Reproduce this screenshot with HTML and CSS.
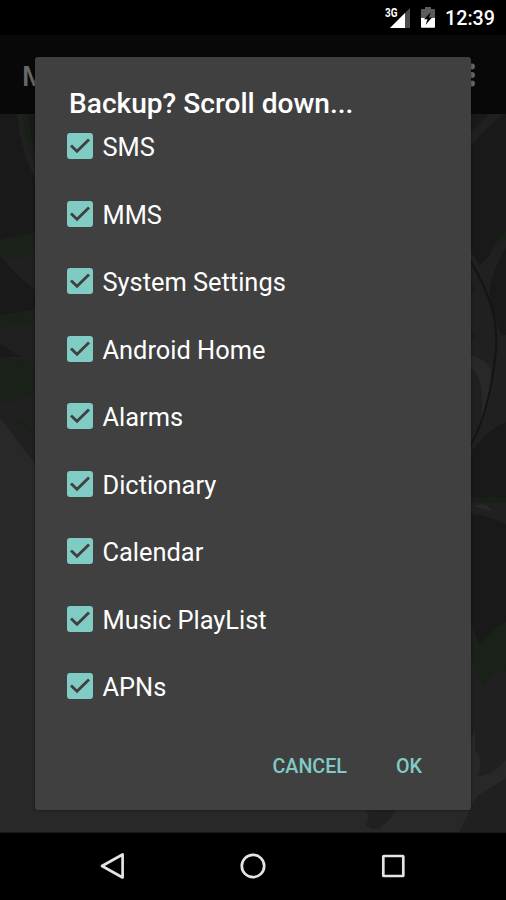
FILE: index.html
```html
<!DOCTYPE html>
<html lang="en">
<head>
<meta charset="utf-8">
<title>Backup</title>
<link rel="stylesheet" href="styles.css">
</head>
<body>
<div class="screen">
  <header class="status">
    <svg class="signal" width="26" height="24" viewBox="0 0 26 24">
      <path d="M25 2V22H5Z" fill="#4b4b4b"/><path d="M20 7V22H5Z" fill="#fff"/>
      <text class="network" x="0" y="11" textLength="12.5" lengthAdjust="spacingAndGlyphs">3G</text>
    </svg>
    <svg class="battery" width="14" height="21" viewBox="0 0 14 21">
      <path d="M0 3q0-1 1-1h3V0h6v2h3q1 0 1 1v8H0Z" fill="#5c5c5c"/>
      <path d="M0 11h14v9q0 .8-1 .8H1q-1 0-1-.8Z" fill="#fff"/>
      <path d="M10 5L3 12.2h3.5L4.5 18L11 10.5H7.8Z" fill="#000"/>
    </svg>
    <span class="clock">12:39</span>
  </header>
  <div class="appbar"><span class="app-title">M</span>
    <svg class="more" width="6" height="24" viewBox="0 0 6 24" fill="#686868"><circle cx="3" cy="3.5" r="2.9"/><circle cx="3" cy="12" r="2.9"/><circle cx="3" cy="20.5" r="2.9"/></svg>
  </div>
  <main class="content">
    <svg class="wallpaper" width="506" height="719" viewBox="0 114 506 719">
      <path fill="#191919" d="M0 114H506V833H0Z"/>
      <path fill="#202020" d="M17 114H23Q26 145 36 168V180Q20 150 17 114Z"/>
      <path fill="#182018" d="M23 114H28Q29 137 36 154V168Q26 145 23 114Z"/>
      <path fill="#202020" d="M0 240L36 232V480L0 417Z"/>
      <path fill="#192119" d="M0 240L36 232V250Q18 265 0 252Z"/>
      <path fill="#191919" d="M0 256Q18 277 36 291V310L0 315Z"/>
      <path fill="#192119" d="M0 315L36 309V323L0 327Z"/>
      <path fill="#191919" d="M0 343L20 357H0Z"/>
      <path fill="#192119" d="M0 357L36 362V391L11 403H0ZM7 414L36 429V438Z"/>
      <path fill="#282828" d="M0 418L36 465V810H506V833H0Z"/>
      <path fill="#202020" d="M470 133Q481 122 490 114H504Q487 126 470 147Z"/>
      <path fill="#202020" d="M470 250L480 266Q489 256 506 233V248Q486 280 490 305Q496 322 501 335H506V422Q487 430 470 453Z"/>
      <path fill="#282828" d="M470 355Q486 359 491 369Q493 400 481 417Q486 380 470 366Z"/>
      <path fill="none" stroke="#101610" stroke-width="2" d="M470 260C492 297 498 323 496 350C492 390 483 424 470 446"/>
      <path fill="#182018" d="M470 499Q490 495 506 498V504H470ZM506 231Q492 243 487 260Q492 248 506 240ZM470 284L477 289L472 294ZM470 330L478 337L470 340Z"/>
      <path fill="#202020" d="M470 503H506V524Q489 516 470 513Z"/>
      <path fill="#282828" d="M474 506Q486 501 492 511L482 509Z"/>
      <path fill="#202020" d="M470 621L480 647Q488 630 506 622V833H458L470 800Z"/>
      <path fill="#192119" d="M470 621L479 645Q488 632 506 623V672Q495 667 484 688Q476 673 470 651Z"/>
      <path fill="#282828" d="M470 740L475 731L475 750Q484 758 478 776Q490 777 506 760V778L476 797L459 833H445V800H470Z"/>
      <path fill="#202020" d="M366 811L378 810H396L390 819L379 829H372L366 825L369 818Z"/>
      <path fill="#191919" d="M0 832H506V833H0Z"/>
    </svg>
    <section class="dialog" role="dialog">
      <h1>Backup? Scroll down...</h1>
      <ul class="options">
        <li><i class="box"><svg viewBox="0 0 26 26"><path d="M4 12.5l6 5.8L22 6.5"/></svg></i><span>SMS</span></li>
        <li><i class="box"><svg viewBox="0 0 26 26"><path d="M4 12.5l6 5.8L22 6.5"/></svg></i><span>MMS</span></li>
        <li><i class="box"><svg viewBox="0 0 26 26"><path d="M4 12.5l6 5.8L22 6.5"/></svg></i><span>System Settings</span></li>
        <li><i class="box"><svg viewBox="0 0 26 26"><path d="M4 12.5l6 5.8L22 6.5"/></svg></i><span>Android Home</span></li>
        <li><i class="box"><svg viewBox="0 0 26 26"><path d="M4 12.5l6 5.8L22 6.5"/></svg></i><span>Alarms</span></li>
        <li><i class="box"><svg viewBox="0 0 26 26"><path d="M4 12.5l6 5.8L22 6.5"/></svg></i><span>Dictionary</span></li>
        <li><i class="box"><svg viewBox="0 0 26 26"><path d="M4 12.5l6 5.8L22 6.5"/></svg></i><span>Calendar</span></li>
        <li><i class="box"><svg viewBox="0 0 26 26"><path d="M4 12.5l6 5.8L22 6.5"/></svg></i><span>Music PlayList</span></li>
        <li><i class="box"><svg viewBox="0 0 26 26"><path d="M4 12.5l6 5.8L22 6.5"/></svg></i><span>APNs</span></li>
      </ul>
      <div class="actions"><button>CANCEL</button><button>OK</button></div>
    </section>
  </main>
  <nav class="navbar">
    <svg width="28" height="28" viewBox="0 0 28 28"><path d="M23.6 2.5V25.5L3 14Z"/></svg>
    <svg width="28" height="28" viewBox="0 0 28 28"><circle cx="14" cy="14" r="11.2"/></svg>
    <svg width="28" height="28" viewBox="0 0 28 28"><rect x="4.3" y="4" width="20" height="20" rx=".5"/></svg>
  </nav>
</div>
</body>
</html>
```
FILE: styles.css
```css
* { box-sizing: border-box; }
body { margin: 0; background: #000; font-family: Roboto, sans-serif; }
.screen { position: relative; width: 506px; height: 900px; overflow: hidden; display: flex; flex-direction: column; }
.status { height: 35px; display: flex; align-items: flex-start; justify-content: flex-end; padding: 6px 11px 0 0; color: #fff; }
.signal { margin-right: 10px; }
.network { font-size: 12px; font-weight: 700; fill: #fff; }
.battery { margin: 1px 10px 0 0; }
.clock { font-size: 19.7px; line-height: 26px; font-weight: 500; }
.appbar { height: 79px; background: #080808; display: flex; align-items: center; justify-content: space-between; padding: 0 31px 0 22px; }
.app-title { color: #686868; font-size: 28px; font-weight: 500; padding-top: 4px; }
.content { height: 719px; }
.wallpaper { display: block; }
.dialog { position: absolute; left: 35px; top: 57px; width: 436px; height: 753px; border-radius: 3px; background: #404040; padding: 29px 32px 0; box-shadow: 0 0 3px rgba(0,0,0,.5); }
h1 { margin: 0 0 0 2px; font-size: 28.1px; line-height: 36px; font-weight: 500; color: #fff; white-space: nowrap; }
.options { list-style: none; margin: -9.5px 0 0; padding: 0; }
.options li { height: 67.5px; display: flex; align-items: center; gap: 9.5px; color: #fff; font-size: 25.4px; }
.options span { padding-top: 2px; }
.box { width: 26px; height: 26px; border-radius: 3px; background: #80cbc4; flex: none; }
.box svg { display: block; }
.box path { fill: none; stroke: #404040; stroke-width: 2.8; }
.actions { display: flex; justify-content: flex-end; gap: 49px; padding: 34.5px 17px 0 0; }
.actions button { border: 0; padding: 0; background: none; color: #80cbc4; font: 500 19.7px/24px Roboto, sans-serif; }
.navbar { height: 67px; background: #000; display: flex; justify-content: center; align-items: center; gap: 112px; padding-bottom: 1px; }
.navbar svg { fill: none; stroke: #e4e4e4; stroke-width: 2.7; stroke-linejoin: round; }
```
